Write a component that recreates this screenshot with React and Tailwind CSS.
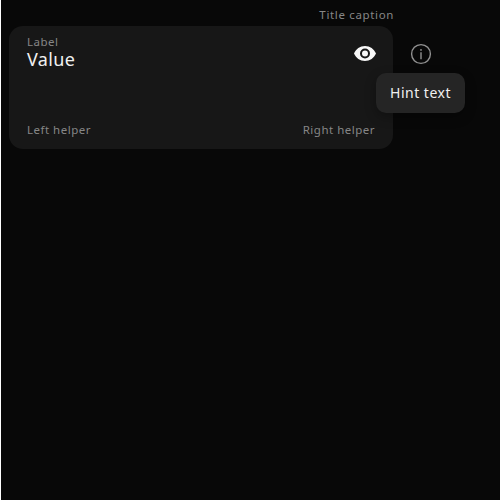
function EyeIcon() {
  return (
    <svg className="h-6 w-6" viewBox="0 0 24 24" fill="#f7f7f7">
      <path
        fillRule="evenodd"
        d="M12 4C7 4 2.900 7 1 11.500c1.900 4.500 6 7.500 11 7.500s9.100-3 11-7.500C21.100 7 17 4 12 4Zm0 12.500a5 5 0 1 1 0-10 5 5 0 0 1 0 10Z"
      />
      <circle cx="12" cy="11.500" r="3" />
    </svg>
  );
}

function InfoIcon() {
  return (
    <svg className="h-6 w-6" viewBox="0 0 24 24" fill="none">
      <circle cx="12" cy="12" r="9.400" stroke="#929292" strokeWidth="1.400" />
      <circle cx="12" cy="7.900" r="0.900" fill="#929292" />
      <path d="M12 10.300v6.900" stroke="#929292" strokeWidth="1.400" />
    </svg>
  );
}

export default function App() {
  return (
    <div className="h-[500px] w-[500px] overflow-hidden border-l border-white bg-[#080808] pl-2 font-['Noto_Sans',sans-serif]">
      <div className="flex h-[26px] w-[385px] items-end justify-end pb-1 text-[11.5px] leading-[14px] tracking-[0.65px] text-[#868686]">
        Title caption
      </div>
      <div className="relative flex w-[456px] gap-4">
        <div className="flex h-[123px] w-[384px] flex-col rounded-[14px] bg-[#171717] px-[18px] pt-[9px] pb-3 text-[11.5px] leading-[14px] tracking-[0.5px] text-[#868686]">
          <div className="flex justify-between">
            <div>
              <div>Label</div>
              <div className="text-lg leading-[21px] tracking-[0.35px] text-[#f0f0f0]">Value</div>
            </div>
            <div className="-mr-0.5 pt-[7px]">
              <EyeIcon />
            </div>
          </div>
          <div className="mt-auto flex justify-between">
            <span>Left helper</span>
            <span>Right helper</span>
          </div>
        </div>
        <div className="pt-4">
          <InfoIcon />
        </div>
        <div className="absolute top-[47px] left-[367px] flex h-10 w-[89px] items-center justify-center rounded-[10px] bg-[#252525] text-sm leading-[18px] tracking-[0.5px] whitespace-nowrap text-[#f0f0f0] shadow-[0_4px_12px_rgba(0,0,0,0.3)]">
          Hint text
        </div>
      </div>
    </div>
  );
}
